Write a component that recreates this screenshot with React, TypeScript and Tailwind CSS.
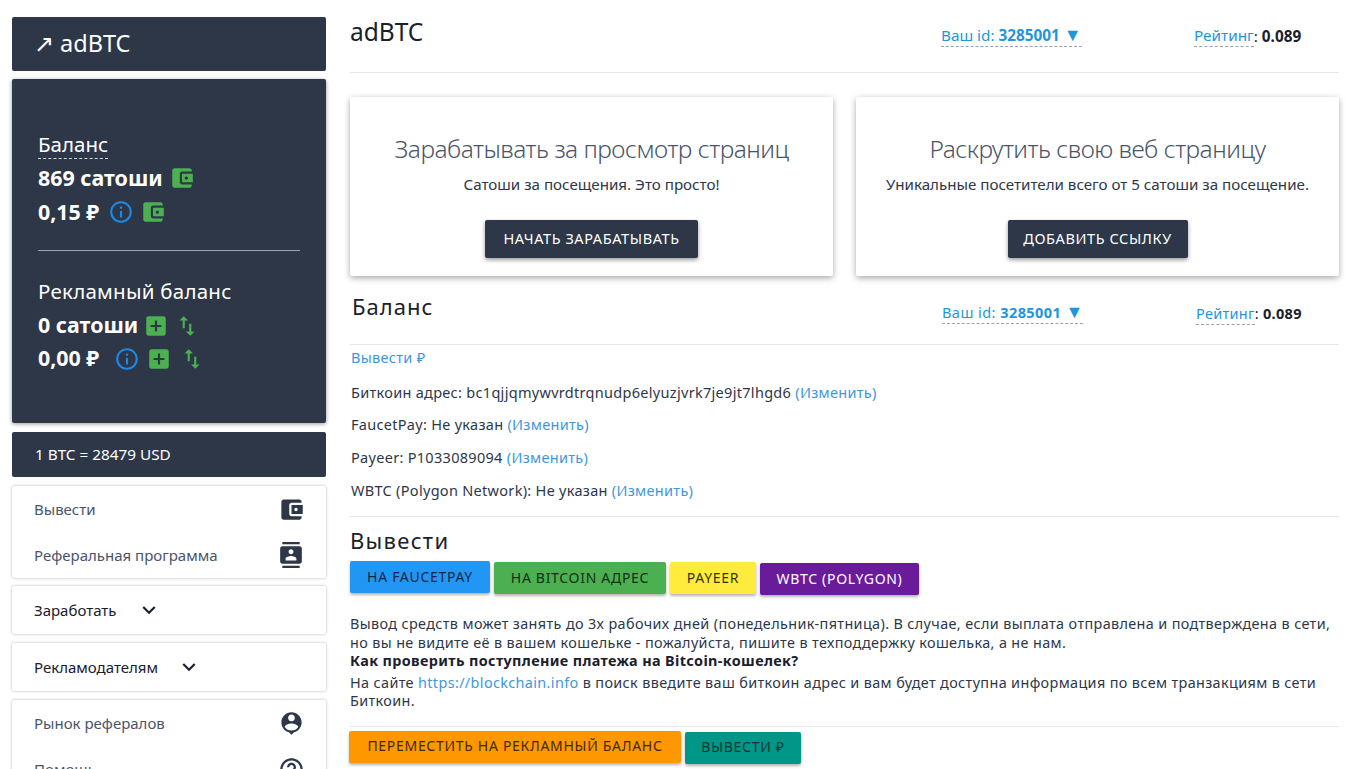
import React from "react";

const P = {
  wallet: "M21 18v1c0 1.1-.9 2-2 2H5c-1.11 0-2-.9-2-2V5c0-1.1.89-2 2-2h14c1.1 0 2 .9 2 2v1h-9c-1.11 0-2 .9-2 2v8c0 1.1.89 2 2 2h9zm-9-2h10V8H12v8zm4-2.5c-.83 0-1.5-.67-1.5-1.5s.67-1.5 1.5-1.5 1.5.67 1.5 1.5-.67 1.5-1.5 1.5z",
  contacts: "M20 0H4v2h16V0zM4 24h16v-2H4v2zM20 4H4c-1.1 0-2 .9-2 2v12c0 1.1.9 2 2 2h16c1.1 0 2-.9 2-2V6c0-1.1-.9-2-2-2zm-8 2.75c1.24 0 2.25 1.01 2.25 2.25s-1.01 2.25-2.25 2.25S9.75 10.24 9.75 9 10.76 6.75 12 6.75zM17 17H7v-1.5c0-1.67 3.33-2.5 5-2.5s5 .83 5 2.5V17z",
  pin: "M12 2c-4.97 0-9 4.03-9 9 0 4.17 2.84 7.67 6.69 8.69L12 22l2.31-2.31C18.16 18.67 21 15.17 21 11c0-4.97-4.03-9-9-9zm0 2c1.66 0 3 1.34 3 3s-1.34 3-3 3-3-1.34-3-3 1.34-3 3-3zm0 14.3c-2.5 0-4.71-1.28-6-3.22.03-1.99 4-3.08 6-3.08 1.99 0 5.97 1.09 6 3.08-1.29 1.94-3.5 3.22-6 3.22z",
  help: "M11 18h2v-2h-2v2zm1-16C6.48 2 2 6.48 2 12s4.48 10 10 10 10-4.48 10-10S17.52 2 12 2zm0 18c-4.41 0-8-3.59-8-8s3.59-8 8-8 8 3.59 8 8-3.59 8-8 8zm0-14c-2.21 0-4 1.79-4 4h2c0-1.1.9-2 2-2s2 .9 2 2c0 2-3 1.75-3 5h2c0-2.25 3-2.5 3-5 0-2.21-1.79-4-4-4z",
  add: "M19 3H5c-1.11 0-2 .9-2 2v14c0 1.1.89 2 2 2h14c1.1 0 2-.9 2-2V5c0-1.1-.9-2-2-2zm-2 10h-4v4h-2v-4H7v-2h4V7h2v4h4v2z",
  swap: "M16 17.01V10h-2v7.01h-3L15 21l4-3.99h-3zM9 3L5 6.99h3V14h2V6.99h3L9 3z",
  info: "M11 7h2v2h-2zm0 4h2v6h-2zm1-9C6.48 2 2 6.48 2 12s4.48 10 10 10 10-4.48 10-10S17.52 2 12 2zm0 18c-4.41 0-8-3.59-8-8s3.59-8 8-8 8 3.59 8 8-3.59 8-8 8z",
  down: "M16.59 8.59L12 13.17 7.41 8.59 6 10l6 6 6-6z",
};

function Icon({ d, className }: { d: string; className: string }) {
  return (
    <svg viewBox="0 0 24 24" fill="currentColor" className={`shrink-0 ${className}`}>
      <path d={d} />
    </svg>
  );
}

function Change() {
  return <a className="text-[#3f97dc]">(Изменить)</a>;
}

function IdRow({ tight }: { tight?: boolean }) {
  return (
    <div className={tight ? "flex items-center text-[14.5px] tracking-[0.45px]" : "flex items-center text-[15.3px]"}>
      <span className="border-b border-dashed border-gray-400 leading-[21px] text-[#1e96dc]">
        Ваш id: <b>3285001</b> <span className="text-[18px] leading-[0] tracking-normal">▼</span>
      </span>
    </div>
  );
}

function Rating({ tight }: { tight?: boolean }) {
  return (
    <div className={tight ? "flex items-center text-[14.5px] tracking-[0.3px]" : "flex items-center text-[15.3px]"}>
      <span className="border-b border-dashed border-gray-400 leading-[21px] text-[#1e96dc]">Рейтинг</span>
      <span className="text-[#1a202c]">:&nbsp;<b>0.089</b></span>
    </div>
  );
}

function Promo({ title, text, btn, w }: { title: string; text: string; btn: string; w: string }) {
  return (
    <div className="flex h-[179px] w-[483px] flex-col items-center rounded-[2px] bg-white pt-[34px] shadow-[0_2px_6px_rgba(0,0,0,0.35)]">
      <div className="text-[24.5px] font-light leading-[36px] tracking-[-0.5px] text-[#4a5568]">{title}</div>
      <div className="mt-[5px] text-[15.15px] leading-[24px] text-[#2d3748]">{text}</div>
      <button className={`mt-[24px] h-[38px] rounded-[2px] bg-[#2d3748] text-center text-[14.5px] tracking-[0.6px] text-white shadow-[0_2px_4px_rgba(0,0,0,0.4)] ${w}`}>
        {btn}
      </button>
    </div>
  );
}

function Colored({ c, children, w }: { c: string; children: React.ReactNode; w: string }) {
  return (
    <button className={`h-[32px] rounded-[2px] pb-[2px] text-center text-[14px] tracking-[0.7px] shadow-[0_2px_3px_rgba(0,0,0,0.3)] ${c} ${w}`}>
      {children}
    </button>
  );
}

const row = "flex h-[46px] items-center justify-between pl-[22px] pr-[21px] text-[15px] text-[#4a5568]";
const whiteCard = "rounded-[2px] bg-white shadow-[0_0_3px_rgba(0,0,0,0.3)]";
const dropdown = "flex h-[48px] items-center pl-[22px] text-[15px] text-[#1a202c]";

export default function App() {
  return (
    <div className="flex h-[769px] overflow-hidden bg-white font-['Noto_Sans','Open_Sans',sans-serif] text-[#2d3748]">
      <aside className="ml-3 mt-[17px] w-[314px] shrink-0">
        <div className="flex h-[54px] items-center rounded-[2px] bg-[#2d3748] pl-[22px] text-[23.5px] text-white">↗ adBTC</div>
        <div className="mt-2 h-[344px] rounded-[2px] bg-[#2d3748] px-[26px] pt-[52px] text-white shadow-[0_1px_4px_rgba(0,0,0,0.4)]">
          <span className="border-b border-dashed border-gray-300 text-[20.5px] leading-[27px]">Баланс</span>
          <div className="mt-[3px] flex h-[34px] items-center text-[21.4px] font-bold">
            869 сатоши
            <Icon d={P.wallet} className="ml-[6px] size-[26px] text-[#4caf50]" />
          </div>
          <div className="flex h-[34px] items-center text-[21.4px] font-bold">
            0,15 ₽
            <Icon d={P.info} className="ml-[9px] size-[26px] text-[#1e88e5]" />
            <Icon d={P.wallet} className="ml-[6px] size-[26px] text-[#4caf50]" />
          </div>
          <div className="mt-[21px] h-px bg-gray-400" />
          <div className="mt-[25px] text-[20.5px] leading-[30px] tracking-[0.25px]">Рекламный баланс</div>
          <div className="mt-[3px] flex h-[33px] items-center text-[21.4px] font-bold">
            0 сатоши
            <Icon d={P.add} className="ml-[5px] size-[26px] text-[#4caf50]" />
            <Icon d={P.swap} className="ml-[5px] size-[26px] text-[#4caf50]" />
          </div>
          <div className="flex h-[33px] items-center text-[21.4px] font-bold">
            0,00 ₽
            <Icon d={P.info} className="ml-[15px] size-[26px] text-[#1e88e5]" />
            <Icon d={P.add} className="ml-[6px] size-[26px] text-[#4caf50]" />
            <Icon d={P.swap} className="ml-[7px] size-[26px] text-[#4caf50]" />
          </div>
        </div>
        <div className="mt-[9px] flex h-[45px] items-center rounded-[2px] bg-[#2d3748] pl-[23px] text-[15.3px] text-white">1 BTC = 28479 USD</div>
        <div className={`mt-[9px] h-[92px] ${whiteCard}`}>
          <div className={row}>Вывести <Icon d={P.wallet} className="size-[27px] text-[#2d3748]" /></div>
          <div className={row}>Реферальная программа <Icon d={P.contacts} className="mr-[1px] size-[26px] text-[#2d3748]" /></div>
        </div>
        <div className={`mt-[8px] ${dropdown} ${whiteCard}`}>
          Заработать <Icon d={P.down} className="ml-[19px] size-[26px] text-[#1a202c]" />
        </div>
        <div className={`mt-[9px] ${dropdown} ${whiteCard}`}>
          Рекламодателям <Icon d={P.down} className="ml-[18px] size-[26px] text-[#1a202c]" />
        </div>
        <div className={`mt-[9px] h-[92px] ${whiteCard}`}>
          <div className={row}>Рынок рефералов <Icon d={P.pin} className="size-[27px] text-[#2d3748]" /></div>
          <div className={row}>Помощь <Icon d={P.help} className="size-[27px] text-[#2d3748]" /></div>
        </div>
      </aside>

      <main className="ml-6 w-[989px] shrink-0">
        <header className="flex h-[73px] border-b border-[#e5e7eb] pt-[14px]">
          <div className="w-[591px] text-[24.5px] leading-[36px] text-[#1a202c]">adBTC</div>
          <div className="w-[253px] pt-[11px]"><IdRow /></div>
          <div className="pt-[11px]"><Rating /></div>
        </header>
        <div className="mt-[24px] flex justify-between">
          <Promo title="Зарабатывать за просмотр страниц" text="Сатоши за посещения. Это просто!" btn="НАЧАТЬ ЗАРАБАТЫВАТЬ" w="w-[213px]" />
          <Promo title="Раскрутить свою веб страницу" text="Уникальные посетители всего от 5 сатоши за посещение." btn="ДОБАВИТЬ ССЫЛКУ" w="w-[180px]" />
        </div>
        <div className="flex h-[69px] border-b border-[#e5e7eb] pt-[14px]">
          <div className="w-[592px] pl-[2px] text-[22px] leading-[32px] tracking-[1px] text-[#1a202c]">Баланс</div>
          <div className="w-[254px] pt-[12px]"><IdRow tight /></div>
          <div className="pt-[13px]"><Rating tight /></div>
        </div>
        <div className="pl-[1px] text-[14.5px] leading-[20px] tracking-[0.3px] text-[#2d3748]">
          <div className="mt-[2px] h-[20px] text-[#3f97dc]">Вывести ₽</div>
          <div className="mt-[15px]">Биткоин адрес: bc1qjjqmywvrdtrqnudp6elyuzjvrk7je9jt7lhgd6 <Change /></div>
          <div className="mt-[12px]">FaucetPay: Не указан <Change /></div>
          <div className="mt-[13px]">Payeer: P1033089094 <Change /></div>
          <div className="mt-[13px]">WBTC (Polygon Network): Не указан <Change /></div>
        </div>
        <div className="mt-[16px] h-px bg-[#e5e7eb]" />
        <div className="mt-[8px] text-[22px] leading-[30px] tracking-[1.3px] text-[#1a202c]">Вывести</div>
        <div className="mt-[6px] flex h-[33px] items-start gap-[4px]">
          <Colored c="bg-[#2196f3] text-[#16264a]" w="w-[140px]">НА FAUCETPAY</Colored>
          <Colored c="mt-px bg-[#4caf50] text-[#12301a]" w="w-[172px]">НА BITCOIN АДРЕС</Colored>
          <Colored c="mt-px bg-[#ffeb3b] text-[#33331a]" w="w-[86px]">PAYEER</Colored>
          <Colored c="mt-[2px] bg-[#6a1b9a] text-white" w="w-[159px]">WBTC (POLYGON)</Colored>
        </div>
        <div className="mt-[21px] text-[14.4px] leading-[18.5px] tracking-[0.37px] text-[#2d3748]">
          <p>Вывод средств может занять до 3х рабочих дней (понедельник-пятница). В случае, если выплата отправлена и подтверждена в сети, но вы не видите её в вашем кошельке - пожалуйста, пишите в техподдержку кошелька, а не нам.</p>
          <p className="font-bold text-[#1a202c]">Как проверить поступление платежа на Bitcoin-кошелек?</p>
          <p className="mt-[3px]">На сайте <a className="text-[#3f97dc]">https://blockchain.info</a> в поиск введите ваш биткоин адрес и вам будет доступна информация по всем транзакциям в сети Биткоин.</p>
        </div>
        <div className="mt-[15px] h-px bg-[#e5e7eb]" />
        <div className="-ml-px mt-[4px] flex items-start gap-[4px]">
          <Colored c="bg-[#ff9800] text-[#40280a]" w="w-[332px]">ПЕРЕМЕСТИТЬ НА РЕКЛАМНЫЙ БАЛАНС</Colored>
          <Colored c="mt-px bg-[#009688] text-[#0f3531]" w="w-[116px]">ВЫВЕСТИ ₽</Colored>
        </div>
      </main>
    </div>
  );
}
